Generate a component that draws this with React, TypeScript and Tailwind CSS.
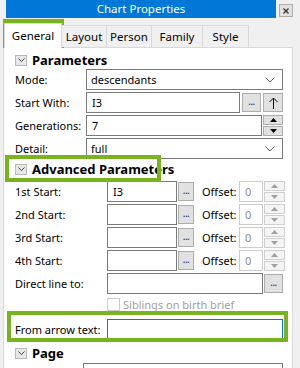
import React from 'react';

const Chevron: React.FC = () => (
  <svg width="7" height="4" viewBox="0 0 7 4" fill="none" stroke="#444" strokeWidth="1">
    <polyline points="0.5,0.5 3.5,3.5 6.5,0.5" />
  </svg>
);

const SectionHeader: React.FC<{ title: string; className?: string }> = ({ title, className }) => (
  <div className={`flex items-center h-[12px] pl-[11px] ${className ?? ''}`}>
    <span className="w-[12px] h-[11px] border border-[#b9b9b9] bg-[#e7e7e7] flex items-center justify-center">
      <Chevron />
    </span>
    <span className="ml-[5px] font-bold text-[13px] leading-none text-black">{title}</span>
  </div>
);

const Label: React.FC<{ text: string; w: string }> = ({ text, w }) => (
  <span className={`${w} shrink-0 text-[11px] text-black leading-none whitespace-nowrap`}>{text}</span>
);

const Combo: React.FC<{ value: string }> = ({ value }) => (
  <div className="flex-1 h-[21px] border border-[#7a7a7a] bg-white flex items-center pl-[4px] pr-[7px]">
    <span className="flex-1 text-[11px] leading-none">{value}</span>
    <svg width="10" height="6" viewBox="0 0 10 6" fill="none" stroke="#5a5a5a" strokeWidth="1">
      <polyline points="0.5,0.5 5,5 9.5,0.5" />
    </svg>
  </div>
);

const TextBox: React.FC<{ value?: string; className?: string; focused?: boolean }> = ({ value, className, focused }) => (
  <div
    className={`h-[21px] bg-white flex items-center pl-[5px] text-[11px] leading-none ${
      focused ? 'border border-[#0078d7]' : 'border border-[#7a7a7a]'
    } ${className ?? ''}`}
  >
    {value}
  </div>
);

const Dots: React.FC<{ w: string }> = ({ w }) => (
  <div className={`${w} h-[19px] shrink-0 bg-[#e1e1e1] border border-[#adadad] flex items-end justify-center pb-[5px]`}>
    <span className="text-[10px] leading-none text-[#1a1a5a] tracking-[-0.5px]">...</span>
  </div>
);

const SpinArrows: React.FC<{ disabled?: boolean; w: string }> = ({ disabled, w }) => {
  const c = disabled ? '#a0a0a0' : '#000';
  const b = disabled ? 'border-[#cfcfcf] bg-[#f4f4f4]' : 'border-[#adadad] bg-[#e1e1e1]';
  return (
    <div className={`${w} h-[21px] shrink-0 flex flex-col gap-[1px]`}>
      <div className={`flex-1 border ${b} flex items-center justify-center`}>
        <svg width="7" height="4" viewBox="0 0 7 4"><polygon points="0,4 3.5,0 7,4" fill={c} /></svg>
      </div>
      <div className={`flex-1 border ${b} flex items-center justify-center`}>
        <svg width="7" height="4" viewBox="0 0 7 4"><polygon points="0,0 3.5,4 7,0" fill={c} /></svg>
      </div>
    </div>
  );
};

const StartRow: React.FC<{ label: string; value?: string; className?: string }> = ({ label, value, className }) => (
  <div className={`flex items-center h-[21px] ${className ?? ''}`}>
    <Label text={label} w="w-[92px]" />
    <TextBox value={value} className="w-[70px]" />
    <div className="ml-[1px]">
      <Dots w="w-[16px]" />
    </div>
    <span className="ml-[8px] w-[37px] text-[11px] leading-none">Offset:</span>
    <div className="w-[24px] h-[21px] border border-[#cccccc] bg-white flex items-center pl-[5px] text-[11px] text-[#8a8a8a] leading-none">
      0
    </div>
    <div className="ml-[1px]">
      <SpinArrows disabled w="w-[21px]" />
    </div>
  </div>
);

const tabs = ['General', 'Layout', 'Person', 'Family', 'Style'];
const tabWidths = ['w-[58px]', 'w-[45px]', 'w-[45px]', 'w-[51px]', 'w-[46px]'];

export default function App() {
  return (
    <div className="relative w-[300px] h-[368px] overflow-hidden bg-[#f0f0f0] font-['Noto_Sans',sans-serif] text-black">
      {/* title bar */}
      <div className="flex h-[18px]">
        <div className="ml-[6px] w-[270px] h-[18px] bg-[#0078d7] flex items-center justify-center">
          <span className="text-white text-[11.5px] leading-none">Chart Properties</span>
        </div>
        <div className="ml-[3px] mt-[4px] w-[14px] h-[13px] bg-[#e1e1e1] border border-[#adadad] flex items-center justify-center">
          <svg width="6" height="6" viewBox="0 0 6 6" stroke="#333" strokeWidth="1.3">
            <line x1="0.5" y1="0.5" x2="5.5" y2="5.5" />
            <line x1="5.5" y1="0.5" x2="0.5" y2="5.5" />
          </svg>
        </div>
      </div>

      {/* tabs */}
      <div className="flex items-end h-[29px] pl-[4px] relative z-10">
        {tabs.map((t, i) =>
          i === 0 ? (
            <div
              key={t}
              className={`${tabWidths[i]} h-[25px] bg-white border border-b-0 border-[#d9d9d9] flex items-center justify-center text-[11.5px] leading-none -mb-[1px]`}
            >
              {t}
            </div>
          ) : (
            <div
              key={t}
              className={`${tabWidths[i]} h-[22px] bg-[#f0f0f0] border border-l-0 border-b-0 border-[#d9d9d9] flex items-center justify-center text-[11.5px] leading-none`}
            >
              {t}
            </div>
          )
        )}
      </div>

      {/* panel */}
      <div className="ml-[3px] w-[290px] h-[330px] bg-white border border-[#d9d9d9] flex flex-col">
        <SectionHeader title="Parameters" className="mt-[6px]" />
        <div className="flex items-center h-[21px] mt-[3px] pl-[11px] pr-[9px]">
          <Label text="Mode:" w="w-[71px]" />
          <Combo value="descendants" />
        </div>
        <div className="flex items-center h-[21px] mt-[2px] pl-[11px] pr-[9px]">
          <Label text="Start With:" w="w-[71px]" />
          <TextBox value="I3" className="flex-1" />
          <div className="ml-[2px]">
            <Dots w="w-[19px]" />
          </div>
          <div className="ml-[2px] w-[20px] h-[19px] bg-[#e1e1e1] border border-[#adadad] flex items-center justify-center">
            <svg width="9" height="12" viewBox="0 0 9 12" fill="none" stroke="#000" strokeWidth="1">
              <line x1="4.5" y1="1" x2="4.5" y2="12" />
              <polyline points="0.5,5 4.5,1 8.5,5" />
            </svg>
          </div>
        </div>
        <div className="flex items-center h-[21px] mt-[2px] pl-[11px] pr-[9px]">
          <Label text="Generations:" w="w-[71px]" />
          <TextBox value="7" className="flex-1" />
          <div className="ml-[1px]">
            <SpinArrows w="w-[20px]" />
          </div>
        </div>
        <div className="flex items-center h-[21px] mt-[2px] pl-[11px] pr-[9px]">
          <Label text="Detail:" w="w-[71px]" />
          <Combo value="full" />
        </div>

        <SectionHeader title="Advanced Parameters" className="mt-[4px]" />
        <div className="pl-[11px] flex flex-col">
          <StartRow label="1st Start:" value="I3" className="mt-[6px]" />
          <StartRow label="2nd Start:" className="mt-[2px]" />
          <StartRow label="3rd Start:" className="mt-[2px]" />
          <StartRow label="4th Start:" className="mt-[2px]" />
        </div>
        <div className="flex items-center h-[21px] mt-[2px] pl-[11px] pr-[9px]">
          <Label text="Direct line to:" w="w-[92px]" />
          <TextBox className="flex-1" />
          <div className="ml-[1px]">
            <Dots w="w-[19px]" />
          </div>
        </div>
        <div className="flex items-center h-[13px] mt-[4px] pl-[103px]">
          <span className="w-[13px] h-[13px] border border-[#cccccc] bg-white" />
          <span className="ml-[3px] text-[11px] leading-none text-[#a0a0a0]">Siblings on birth brief</span>
        </div>
        <div className="flex items-center h-[21px] mt-[8px] pl-[11px] pr-[9px]">
          <Label text="From arrow text:" w="w-[92px]" />
          <TextBox className="flex-1" focused />
        </div>

        <SectionHeader title="Page" className="mt-[7px]" />
        <div className="flex items-start h-[21px] mt-[4px] pl-[11px] pr-[9px]">
          <span className="w-[68px] shrink-0 text-[11px] leading-none pt-[3px]">Size:</span>
          <Combo value="A4" />
        </div>
      </div>

      {/* highlight annotations */}
      <div className="absolute left-[3px] top-[19px] w-[61px] h-[29px] border-4 border-[#78b41e] pointer-events-none" />
      <div className="absolute left-[5px] top-[155px] w-[156px] h-[27px] border-4 border-[#78b41e] pointer-events-none" />
      <div className="absolute left-[7px] top-[311px] w-[281px] h-[31px] border-4 border-[#78b41e] pointer-events-none" />
    </div>
  );
}
